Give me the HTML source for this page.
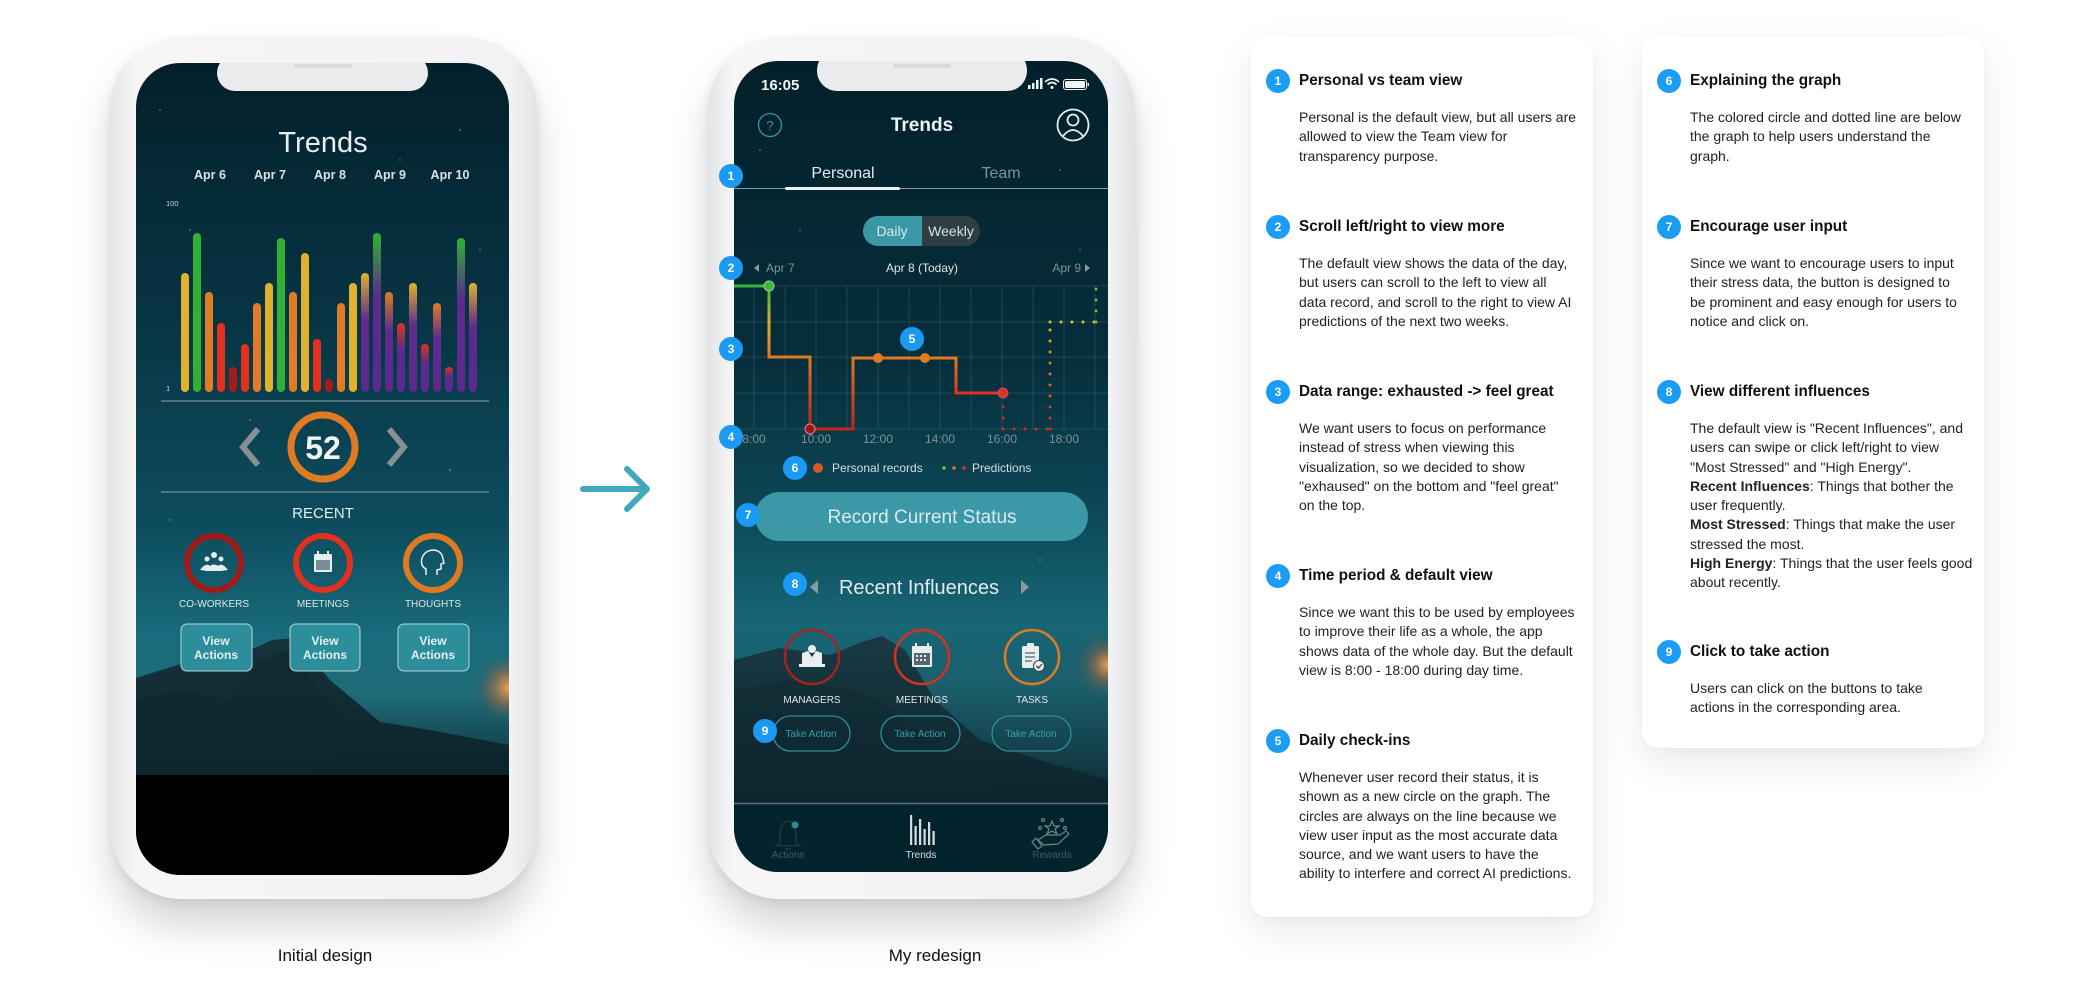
<!DOCTYPE html>
<html><head><meta charset="utf-8">
<style>
*{margin:0;padding:0;box-sizing:border-box}
body{width:2088px;height:1002px;background:#fff;position:relative;overflow:hidden;font-family:"Liberation Sans",Arial,sans-serif}
.frame{position:absolute;width:427px;height:862px;border-radius:72px;background:linear-gradient(90deg,#e4e5e8,#f6f6f7 6%,#f2f2f4 94%,#e2e3e6);box-shadow:0 28px 40px rgba(0,0,0,.16),0 4px 10px rgba(0,0,0,.08)}
.btn{position:absolute;width:4px;background:#e3e4e7;border-radius:2px}
.screen{position:absolute;border-radius:44px;overflow:hidden}
.card{position:absolute;background:#fff;border-radius:16px;box-shadow:0 14px 40px rgba(0,0,0,.09),0 2px 6px rgba(0,0,0,.03)}
.b{position:absolute;left:15px;width:24px;height:24px;border-radius:50%;background:#1b9df3;color:#fff;font-size:12px;font-weight:bold;text-align:center;line-height:24px}
.t{position:absolute;left:48px;font-size:15.3px;font-weight:bold;color:#111;white-space:nowrap;line-height:20px}
.p{position:absolute;left:48px;font-size:14px;color:#222;line-height:19.3px;white-space:nowrap}
.lbl{position:absolute;font-size:17px;color:#111;transform:translateX(-50%);white-space:nowrap}
</style></head><body>

<!-- Phone 1 -->
<div class="frame" style="left:110px;top:37px"></div>
<div class="btn" style="left:536px;top:230px;height:110px"></div>
<div class="screen" style="left:136px;top:63px;width:373px;height:812px">
<svg width="373" height="812" viewBox="136 63 373 812" style="display:block" font-family="Liberation Sans, Arial, sans-serif">
<defs>
<linearGradient id="sky1" x1="0" y1="63" x2="0" y2="780" gradientUnits="userSpaceOnUse">
<stop offset="0" stop-color="#03202a"/><stop offset=".35" stop-color="#073444"/><stop offset=".65" stop-color="#0d4d5e"/><stop offset=".8" stop-color="#186c7c"/><stop offset=".88" stop-color="#1e6b78"/><stop offset="1" stop-color="#0f2e38"/></linearGradient>
<radialGradient id="glow1" cx="509" cy="688" r="38" gradientUnits="userSpaceOnUse"><stop offset="0" stop-color="#f3a552"/><stop offset=".45" stop-color="#a26a48" stop-opacity=".6"/><stop offset="1" stop-color="#1d5c68" stop-opacity="0"/></radialGradient>
<linearGradient id="mt1" x1="0" y1="630" x2="0" y2="780" gradientUnits="userSpaceOnUse"><stop offset="0" stop-color="#17343d"/><stop offset="1" stop-color="#0b222a"/></linearGradient>
<linearGradient id="pY" x1="0" y1="0" x2="0" y2="1"><stop offset="0" stop-color="#e0b12e"/><stop offset=".4" stop-color="#5b2a8c"/></linearGradient>
<linearGradient id="pG" x1="0" y1="0" x2="0" y2="1"><stop offset="0" stop-color="#2fb234"/><stop offset=".4" stop-color="#5b2a8c"/></linearGradient>
<linearGradient id="pO" x1="0" y1="0" x2="0" y2="1"><stop offset="0" stop-color="#e07c25"/><stop offset=".4" stop-color="#5b2a8c"/></linearGradient>
<linearGradient id="pR" x1="0" y1="0" x2="0" y2="1"><stop offset="0" stop-color="#e0321e"/><stop offset=".4" stop-color="#5b2a8c"/></linearGradient>
</defs>
<rect x="136" y="63" width="373" height="812" fill="url(#sky1)"/>
<rect x="440" y="640" width="69" height="100" fill="url(#glow1)"/>
<path d="M136 678 L200 658 L255 648 L272 640 L295 638 L330 680 L380 722 L430 730 L509 745 L509 780 L136 780Z" fill="url(#mt1)"/>
<path d="M136 700 L180 690 L230 700 L260 660 L290 650 L320 690 L360 740 L300 780 L136 780Z" fill="#0e2830" opacity=".6"/>
<rect x="136" y="775" width="373" height="100" fill="#000"/>
<g fill="#fff" opacity=".5"><circle cx="160" cy="110" r=".8"/><circle cx="460" cy="130" r=".8"/><circle cx="190" cy="230" r=".7"/><circle cx="480" cy="250" r=".7"/><circle cx="250" cy="420" r=".7"/><circle cx="450" cy="470" r=".8"/><circle cx="170" cy="520" r=".7"/><circle cx="400" cy="160" r=".7"/></g>
<rect x="217" y="55" width="211" height="36" rx="18" fill="#eaebed"/>
<rect x="294" y="64" width="58" height="4" rx="2" fill="#d9dadd"/>
<text x="323" y="152" font-size="29" fill="#e8eef0" text-anchor="middle">Trends</text>
<g font-size="12.5" font-weight="bold" fill="#d9e3e6" text-anchor="middle"><text x="210" y="179">Apr 6</text><text x="270" y="179">Apr 7</text><text x="330" y="179">Apr 8</text><text x="390" y="179">Apr 9</text><text x="450" y="179">Apr 10</text></g>
<text x="166" y="206" font-size="7.5" fill="#c8d3d6">100</text><text x="166" y="391" font-size="7.5" fill="#c8d3d6">1</text>
<g stroke-width="8" stroke-linecap="round">
<line x1="185" y1="277" x2="185" y2="388" stroke="#e0b12e"/>
<line x1="197" y1="237" x2="197" y2="388" stroke="#2fb234"/>
<line x1="209" y1="296" x2="209" y2="388" stroke="#e07c25"/>
<line x1="221" y1="327" x2="221" y2="388" stroke="#e0321e"/>
<line x1="233" y1="371" x2="233" y2="388" stroke="#a31c1c"/>
<line x1="245" y1="348" x2="245" y2="388" stroke="#e0321e"/>
<line x1="257" y1="307" x2="257" y2="388" stroke="#e07c25"/>
<line x1="269" y1="287" x2="269" y2="388" stroke="#e0b12e"/>
<line x1="281" y1="242" x2="281" y2="388" stroke="#2fb234"/>
<line x1="293" y1="296" x2="293" y2="388" stroke="#e07c25"/>
<line x1="305" y1="257" x2="305" y2="388" stroke="#e0b12e"/>
<line x1="317" y1="343" x2="317" y2="388" stroke="#e0321e"/>
<line x1="329" y1="383" x2="329" y2="388" stroke="#a31c1c"/>
<line x1="341" y1="307" x2="341" y2="388" stroke="#e07c25"/>
<line x1="353" y1="287" x2="353" y2="388" stroke="#e0b12e"/>
</g>
<g>
<rect x="361" y="273" width="8" height="119" rx="4" fill="url(#pY)"/>
<rect x="373" y="233" width="8" height="159" rx="4" fill="url(#pG)"/>
<rect x="385" y="292" width="8" height="100" rx="4" fill="url(#pO)"/>
<rect x="397" y="323" width="8" height="69" rx="4" fill="url(#pR)"/>
<rect x="409" y="283" width="8" height="109" rx="4" fill="url(#pY)"/>
<rect x="421" y="344" width="8" height="48" rx="4" fill="url(#pR)"/>
<rect x="433" y="303" width="8" height="89" rx="4" fill="url(#pO)"/>
<rect x="445" y="367" width="8" height="25" rx="4" fill="url(#pR)"/>
<rect x="457" y="238" width="8" height="154" rx="4" fill="url(#pG)"/>
<rect x="469" y="283" width="8" height="109" rx="4" fill="url(#pY)"/>
</g>
<line x1="161" y1="401" x2="489" y2="401" stroke="#8fa5ab" stroke-width="1"/>
<line x1="161" y1="492" x2="489" y2="492" stroke="#8fa5ab" stroke-width="1"/>
<path d="M258 429 L243 447 L258 465" fill="none" stroke="#8a8f93" stroke-width="6"/>
<path d="M389 429 L404 447 L389 465" fill="none" stroke="#8a8f93" stroke-width="6"/>
<circle cx="323" cy="447" r="32" fill="none" stroke="#e07b22" stroke-width="7"/>
<text x="323" y="459" font-size="32" font-weight="bold" fill="#f2f4f5" text-anchor="middle">52</text>
<text x="323" y="518" font-size="15" fill="#e6eef0" text-anchor="middle">RECENT</text>
<circle cx="214" cy="563" r="27" fill="none" stroke="#a01a1a" stroke-width="6"/>
<circle cx="323" cy="563" r="27" fill="none" stroke="#e0301e" stroke-width="6"/>
<circle cx="433" cy="563" r="27" fill="none" stroke="#e07a20" stroke-width="6"/>
<g fill="#e8eef0"><circle cx="214" cy="555" r="3"/><circle cx="207" cy="559" r="2.5"/><circle cx="221" cy="559" r="2.5"/><path d="M205 571 Q214 558 223 571Z"/><path d="M200 570 Q206 562 210 566 L208 571Z"/><path d="M228 570 Q222 562 218 566 L220 571Z"/></g>
<g><rect x="314" y="554" width="18" height="18" rx="1" fill="#e8eef0"/><rect x="316" y="560" width="14" height="10" fill="#7a8d93"/><rect x="317" y="551" width="2" height="5" fill="#e8eef0"/><rect x="327" y="551" width="2" height="5" fill="#e8eef0"/></g>
<path d="M426 575 L426 569 Q420 566 422 558 Q425 550 434 550 Q442 551 443 559 L444 563 L441 564 L441 569 L437 570 L437 575" fill="none" stroke="#e8eef0" stroke-width="1.5"/>
<g font-size="10" fill="#dfe7e9" text-anchor="middle"><text x="214" y="607">CO-WORKERS</text><text x="323" y="607">MEETINGS</text><text x="433" y="607">THOUGHTS</text></g>
<g fill="#2b8e9a" stroke="#b9d6da" stroke-width="1"><rect x="181" y="624" width="71" height="47" rx="6"/><rect x="290" y="624" width="70" height="47" rx="6"/><rect x="398" y="624" width="71" height="47" rx="6"/></g>
<g font-size="12" font-weight="bold" fill="#e3f0f2" text-anchor="middle"><text x="216" y="645">View</text><text x="216" y="659">Actions</text><text x="325" y="645">View</text><text x="325" y="659">Actions</text><text x="433" y="645">View</text><text x="433" y="659">Actions</text></g>
</svg></div>

<!-- arrow -->
<svg style="position:absolute;left:570px;top:460px" width="100" height="60" viewBox="570 460 100 60"><path d="M583 489 L646 489 M627 469 L647 489 L627 509" fill="none" stroke="#41a9bb" stroke-width="6" stroke-linecap="round" stroke-linejoin="round"/></svg>

<!-- Phone 2 -->
<div class="frame" style="left:708px;top:37px"></div>
<div class="btn" style="left:1134px;top:230px;height:110px"></div>
<div class="screen" style="left:734px;top:61px;width:374px;height:811px">
<svg width="374" height="811" viewBox="734 61 374 811" style="display:block" font-family="Liberation Sans, Arial, sans-serif">
<defs>
<linearGradient id="sky2" x1="0" y1="61" x2="0" y2="803" gradientUnits="userSpaceOnUse">
<stop offset="0" stop-color="#03202a"/><stop offset=".4" stop-color="#062e3b"/><stop offset=".6" stop-color="#0c4656"/><stop offset=".76" stop-color="#176676"/><stop offset=".84" stop-color="#1b5f6c"/><stop offset="1" stop-color="#0d2a33"/></linearGradient>
<radialGradient id="glow2" cx="1108" cy="665" r="36" gradientUnits="userSpaceOnUse"><stop offset="0" stop-color="#f0a050"/><stop offset=".45" stop-color="#8d6248" stop-opacity=".6"/><stop offset="1" stop-color="#1d5c68" stop-opacity="0"/></radialGradient>
<linearGradient id="mt2" x1="0" y1="630" x2="0" y2="803" gradientUnits="userSpaceOnUse"><stop offset="0" stop-color="#1a3a43"/><stop offset="1" stop-color="#0c242c"/></linearGradient>
<linearGradient id="v1" x1="0" y1="286" x2="0" y2="357" gradientUnits="userSpaceOnUse"><stop offset="0" stop-color="#3cb43c"/><stop offset=".5" stop-color="#d9b02a"/><stop offset="1" stop-color="#e07a22"/></linearGradient>
<linearGradient id="v2" x1="0" y1="357" x2="0" y2="429" gradientUnits="userSpaceOnUse"><stop offset="0" stop-color="#e07a22"/><stop offset="1" stop-color="#c0201a"/></linearGradient>
<linearGradient id="v3" x1="0" y1="358" x2="0" y2="393" gradientUnits="userSpaceOnUse"><stop offset="0" stop-color="#e07a22"/><stop offset="1" stop-color="#e0321e"/></linearGradient>
<linearGradient id="v4" x1="0" y1="286" x2="0" y2="429" gradientUnits="userSpaceOnUse"><stop offset="0" stop-color="#3cb43c"/><stop offset=".25" stop-color="#e2c22a"/><stop offset=".55" stop-color="#e07a22"/><stop offset="1" stop-color="#d42a1a"/></linearGradient>
</defs>
<rect x="734" y="61" width="374" height="811" fill="url(#sky2)"/>
<rect x="1040" y="620" width="68" height="90" fill="url(#glow2)"/>
<path d="M734 660 L780 648 L830 655 L862 642 L882 636 L905 650 L935 700 L980 740 L1040 760 L1108 780 L1108 803 L734 803Z" fill="url(#mt2)"/>
<path d="M734 690 L790 680 L850 690 L880 700 L930 740 L1000 790 L734 803Z" fill="#0d2830" opacity=".5"/>
<g fill="#fff" opacity=".5"><circle cx="760" cy="150" r=".8"/><circle cx="1060" cy="170" r=".7"/><circle cx="800" cy="230" r=".7"/><circle cx="1080" cy="250" r=".7"/><circle cx="840" cy="600" r=".7"/><circle cx="1040" cy="560" r=".8"/></g>
<rect x="734" y="803" width="374" height="69" fill="#03232c"/>
<line x1="734" y1="803.5" x2="1108" y2="803.5" stroke="#5e7279" stroke-width="1.5"/>
<rect x="817" y="50" width="210" height="41" rx="20" fill="#eaebed"/>
<rect x="893" y="64" width="58" height="4" rx="2" fill="#d9dadd"/>
<text x="761" y="90" font-size="15" font-weight="bold" fill="#f2f4f5">16:05</text>
<g fill="#f2f4f5"><rect x="1028" y="85" width="2.5" height="4"/><rect x="1032" y="83" width="2.5" height="6"/><rect x="1036" y="80" width="2.5" height="9"/><rect x="1040" y="78" width="2.5" height="11"/></g>
<path d="M1045 82 Q1052 76 1059 82 M1047.5 84.5 Q1052 80.5 1056.5 84.5" fill="none" stroke="#f2f4f5" stroke-width="1.6"/><circle cx="1052" cy="87.5" r="1.5" fill="#f2f4f5"/>
<rect x="1063.5" y="79.5" width="23" height="10" rx="2.5" fill="none" stroke="#f2f4f5" stroke-width="1"/><rect x="1065" y="81" width="20" height="7" rx="1.5" fill="#f2f4f5"/><rect x="1087.5" y="83" width="1.5" height="3" fill="#f2f4f5"/>
<circle cx="770" cy="125" r="11.5" fill="none" stroke="#2a9aa8" stroke-width="1.3"/><text x="770" y="130" font-size="13" fill="#2a9aa8" text-anchor="middle">?</text>
<text x="922" y="131" font-size="19" font-weight="bold" fill="#eef2f3" text-anchor="middle">Trends</text>
<circle cx="1073" cy="125" r="15.5" fill="none" stroke="#e8eef0" stroke-width="1.8"/><circle cx="1073" cy="120" r="5.5" fill="none" stroke="#e8eef0" stroke-width="1.8"/><path d="M1063 136 Q1073 124 1083 136" fill="none" stroke="#e8eef0" stroke-width="1.8"/>
<text x="843" y="178" font-size="16" fill="#e6ecee" text-anchor="middle">Personal</text>
<text x="1001" y="178" font-size="16" fill="#7f9197" text-anchor="middle">Team</text>
<line x1="734" y1="188.5" x2="1108" y2="188.5" stroke="#8c9ca1" stroke-width="1"/>
<rect x="785" y="187" width="115" height="3" rx="1.5" fill="#eef2f3"/>
<rect x="863" y="216" width="117" height="30" rx="15" fill="#2f3e43"/>
<path d="M878 216 L922 216 L922 246 L878 246 A15 15 0 0 1 878 216Z" fill="#3a97a5"/>
<text x="892" y="236" font-size="14" fill="#d5eaee" text-anchor="middle">Daily</text>
<text x="951" y="236" font-size="14" fill="#d9e2e4" text-anchor="middle">Weekly</text>
<path d="M759 264 L759 272 L754 268Z" fill="#8a9a9f"/><text x="766" y="272" font-size="12" fill="#7f9197">Apr 7</text>
<text x="922" y="272" font-size="12" fill="#dfe6e8" text-anchor="middle">Apr 8 (Today)</text>
<text x="1081" y="272" font-size="12" fill="#7f9197" text-anchor="end">Apr 9</text><path d="M1085 264 L1085 272 L1090 268Z" fill="#8a9a9f"/>
<g stroke="#5f8a94" stroke-opacity=".28" stroke-width="1">
<line x1="734" y1="286" x2="1108" y2="286"/><line x1="734" y1="322" x2="1108" y2="322"/><line x1="734" y1="357" x2="1108" y2="357"/><line x1="734" y1="393" x2="1108" y2="393"/><line x1="734" y1="429" x2="1108" y2="429"/>
<line x1="754" y1="286" x2="754" y2="429"/><line x1="785" y1="286" x2="785" y2="429"/><line x1="816" y1="286" x2="816" y2="429"/><line x1="847" y1="286" x2="847" y2="429"/><line x1="878" y1="286" x2="878" y2="429"/><line x1="909" y1="286" x2="909" y2="429"/><line x1="940" y1="286" x2="940" y2="429"/><line x1="971" y1="286" x2="971" y2="429"/><line x1="1002" y1="286" x2="1002" y2="429"/><line x1="1033" y1="286" x2="1033" y2="429"/><line x1="1064" y1="286" x2="1064" y2="429"/><line x1="1095" y1="286" x2="1095" y2="429"/>
</g>
<g fill="none" stroke-width="3" stroke-linecap="square">
<line x1="734" y1="286" x2="769" y2="286" stroke="#3cb43c"/>
<line x1="769" y1="286" x2="769" y2="357" stroke="url(#v1)"/>
<line x1="769" y1="357" x2="810" y2="357" stroke="#e07a22"/>
<line x1="810" y1="357" x2="810" y2="429" stroke="url(#v2)"/>
<line x1="810" y1="429" x2="853" y2="429" stroke="#c8221a"/>
<line x1="853" y1="429" x2="853" y2="358" stroke="url(#v2)"/>
<line x1="853" y1="358" x2="956" y2="358" stroke="#e07a22"/>
<line x1="956" y1="358" x2="956" y2="393" stroke="url(#v3)"/>
<line x1="956" y1="393" x2="1003" y2="393" stroke="#e0321e"/>
</g>
<g fill="none" stroke-width="3" stroke-linecap="round" stroke-dasharray="0 11">
<path d="M1003 396 L1003 429 L1050 429" stroke="#d42a1a"/>
<path d="M1050 429 L1050 322" stroke="url(#v4)"/>
<path d="M1050 322 L1096 322" stroke="#e2c22a"/>
<path d="M1096 322 L1096 286" stroke="#7ab83a"/>
</g>
<circle cx="769" cy="286" r="5" fill="#3cb43c" stroke="#9ad08f" stroke-width="1"/>
<circle cx="810" cy="429" r="5" fill="#9c1616" stroke="#d88" stroke-width="1"/>
<circle cx="878" cy="358" r="5" fill="#e07a22"/><circle cx="925" cy="358" r="5" fill="#e07a22"/>
<circle cx="1003" cy="393" r="5" fill="#e0321e" stroke="#f6a" stroke-opacity=".5" stroke-width="1"/>
<g font-size="12" fill="#7f9197" text-anchor="middle"><text x="754" y="443">8:00</text><text x="816" y="443">10:00</text><text x="878" y="443">12:00</text><text x="940" y="443">14:00</text><text x="1002" y="443">16:00</text><text x="1064" y="443">18:00</text></g>
<circle cx="818" cy="468" r="5" fill="#d65a22"/>
<text x="832" y="472" font-size="12" fill="#d5dfe2">Personal records</text>
<circle cx="944" cy="468" r="1.8" fill="#7ab83a"/><circle cx="954" cy="468" r="1.8" fill="#e07a22"/><circle cx="964" cy="468" r="1.8" fill="#e0321e"/>
<text x="972" y="472" font-size="12" fill="#d5dfe2">Predictions</text>
<rect x="755" y="492" width="333" height="49" rx="24.5" fill="#3c97a6"/>
<text x="922" y="523" font-size="19" fill="#d6ecef" text-anchor="middle">Record Current Status</text>
<path d="M818 580 L818 594 L810 587Z" fill="#8a9ba0"/>
<text x="919" y="594" font-size="20" fill="#e3eaec" text-anchor="middle">Recent Influences</text>
<path d="M1021 580 L1021 594 L1029 587Z" fill="#8a9ba0"/>
<circle cx="812" cy="657" r="27" fill="none" stroke="#a3241d" stroke-width="2.5"/>
<circle cx="922" cy="657" r="27" fill="none" stroke="#d9301e" stroke-width="2.5"/>
<circle cx="1032" cy="657" r="27" fill="none" stroke="#df7b22" stroke-width="2.5"/>
<g fill="#e8eef0"><circle cx="812" cy="649" r="4"/><path d="M802 666 L802 653 L808 651 L812 657 L816 651 L822 653 L822 666Z"/><rect x="799" y="664" width="26" height="3"/></g>
<g><rect x="912" y="646" width="20" height="21" rx="1" fill="#e8eef0"/><rect x="914" y="653" width="16" height="12" fill="#56666b"/><g fill="#e8eef0"><rect x="916" y="655" width="2" height="2"/><rect x="920" y="655" width="2" height="2"/><rect x="924" y="655" width="2" height="2"/><rect x="916" y="659" width="2" height="2"/><rect x="920" y="659" width="2" height="2"/><rect x="924" y="659" width="2" height="2"/></g><rect x="915" y="643" width="2" height="5" fill="#e8eef0"/><rect x="927" y="643" width="2" height="5" fill="#e8eef0"/></g>
<g><rect x="1022" y="646" width="17" height="22" rx="1.5" fill="#e8eef0"/><rect x="1027" y="643" width="7" height="5" rx="1" fill="#e8eef0"/><g stroke="#56666b" stroke-width="1.3"><line x1="1025" y1="653" x2="1035" y2="653"/><line x1="1025" y1="657" x2="1035" y2="657"/><line x1="1025" y1="661" x2="1032" y2="661"/></g><circle cx="1039" cy="666" r="5.5" fill="#e8eef0" stroke="#30454c" stroke-width="1"/><path d="M1036.5 666 L1038.5 668 L1042 664" fill="none" stroke="#30454c" stroke-width="1.3"/></g>
<g font-size="10" fill="#e0e7e9" text-anchor="middle"><text x="812" y="703">MANAGERS</text><text x="922" y="703">MEETINGS</text><text x="1032" y="703">TASKS</text></g>
<g fill="none" stroke="#2e8e9c" stroke-width="1.3"><rect x="773" y="716" width="77" height="35" rx="17.5"/><rect x="881" y="716" width="79" height="35" rx="17.5"/><rect x="992" y="716" width="79" height="35" rx="17.5"/></g>
<g font-size="10" fill="#3aa0ad" text-anchor="middle"><text x="811" y="737">Take Action</text><text x="920" y="737">Take Action</text><text x="1031" y="737">Take Action</text></g>
<path d="M780 843 L780 835 Q780 823 788 821 Q796 823 796 835 L796 843 L800 846 L776 846Z M785 848 Q788 851 791 848" fill="none" stroke="#17363f" stroke-width="1.8"/>
<circle cx="795" cy="825" r="3.5" fill="#2e8a98"/>
<g fill="#d5dde0"><rect x="910" y="815" width="2.2" height="30"/><rect x="914.5" y="826" width="2.2" height="19"/><rect x="919" y="819" width="2.2" height="26"/><rect x="923.5" y="829" width="2.2" height="16"/><rect x="928" y="822" width="2.2" height="23"/><rect x="932.5" y="831" width="2.2" height="14"/></g>
<g fill="none" stroke="#8a9ba0" stroke-width="1.2" opacity=".8"><path d="M1038 840 L1046 835 L1060 835 L1066 831 L1069 834 L1058 844 L1044 845 Z"/><path d="M1036 838 L1042 846 L1038 849 L1032 842Z"/><path d="M1052 821 L1054 826 L1059 826 L1055 829 L1057 834 L1052 831 L1047 834 L1049 829 L1045 826 L1050 826Z"/><circle cx="1043" cy="820" r="1.5"/><circle cx="1062" cy="820" r="1.5"/><circle cx="1040" cy="828" r="1.5"/><circle cx="1065" cy="828" r="1.5"/></g>
<g font-size="10" text-anchor="middle"><text x="788" y="858" fill="#3f5a62">Actions</text><text x="921" y="858" fill="#d5dde0">Trends</text><text x="1052" y="858" fill="#3f5a62">Rewards</text></g>
</svg></div>

<!-- badges overlay -->
<svg style="position:absolute;left:0;top:0" width="2088" height="1002" font-family="Liberation Sans, Arial, sans-serif">
<g fill="#1a9af2"><circle cx="731" cy="176" r="12"/><circle cx="731" cy="268" r="12"/><circle cx="731" cy="349" r="12"/><circle cx="731" cy="437" r="12"/><circle cx="912" cy="339" r="12"/><circle cx="795" cy="468" r="12"/><circle cx="748" cy="515" r="12"/><circle cx="795" cy="584" r="12"/><circle cx="765" cy="731" r="12"/></g>
<g font-size="12" font-weight="bold" fill="#fff" text-anchor="middle"><text x="731" y="180">1</text><text x="731" y="272">2</text><text x="731" y="353">3</text><text x="731" y="441">4</text><text x="912" y="343">5</text><text x="795" y="472">6</text><text x="748" y="519">7</text><text x="795" y="588">8</text><text x="765" y="735">9</text></g>
</svg>

<div class="lbl" style="left:325px;top:946px">Initial design</div>
<div class="lbl" style="left:935px;top:946px">My redesign</div>

<!-- Card 1 -->
<div class="card" style="left:1251px;top:37px;width:342px;height:880px">
<div class="b" style="top:32px">1</div><div class="t" style="top:34px">Personal vs team view</div>
<div class="p" style="top:71px">Personal is the default view, but all users are<br>allowed to view the Team view for<br>transparency purpose.</div>
<div class="b" style="top:178px">2</div><div class="t" style="top:180px">Scroll left/right to view more</div>
<div class="p" style="top:217px">The default view shows the data of the day,<br>but users can scroll to the left to view all<br>data record, and scroll to the right to view AI<br>predictions of the next two weeks.</div>
<div class="b" style="top:343px">3</div><div class="t" style="top:345px">Data range: exhausted -&gt; feel great</div>
<div class="p" style="top:382px">We want users to focus on performance<br>instead of stress when viewing this<br>visualization, so we decided to show<br>"exhaused" on the bottom and "feel great"<br>on the top.</div>
<div class="b" style="top:527px">4</div><div class="t" style="top:529px">Time period &amp; default view</div>
<div class="p" style="top:566px">Since we want this to be used by employees<br>to improve their life as a whole, the app<br>shows data of the whole day. But the default<br>view is 8:00 - 18:00 during day time.</div>
<div class="b" style="top:692px">5</div><div class="t" style="top:694px">Daily check-ins</div>
<div class="p" style="top:731px">Whenever user record their status, it is<br>shown as a new circle on the graph. The<br>circles are always on the line because we<br>view user input as the most accurate data<br>source, and we want users to have the<br>ability to interfere and correct AI predictions.</div>
</div>

<!-- Card 2 -->
<div class="card" style="left:1642px;top:37px;width:342px;height:711px">
<div class="b" style="top:32px">6</div><div class="t" style="top:34px">Explaining the graph</div>
<div class="p" style="top:71px">The colored circle and dotted line are below<br>the graph to help users understand the<br>graph.</div>
<div class="b" style="top:178px">7</div><div class="t" style="top:180px">Encourage user input</div>
<div class="p" style="top:217px">Since we want to encourage users to input<br>their stress data, the button is designed to<br>be prominent and easy enough for users to<br>notice and click on.</div>
<div class="b" style="top:343px">8</div><div class="t" style="top:345px">View different influences</div>
<div class="p" style="top:382px">The default view is "Recent Influences", and<br>users can swipe or click left/right to view<br>"Most Stressed" and "High Energy".<br><b>Recent Influences</b>: Things that bother the<br>user frequently.<br><b>Most Stressed</b>: Things that make the user<br>stressed the most.<br><b>High Energy</b>: Things that the user feels good<br>about recently.</div>
<div class="b" style="top:603px">9</div><div class="t" style="top:605px">Click to take action</div>
<div class="p" style="top:642px">Users can click on the buttons to take<br>actions in the corresponding area.</div>
</div>
</body></html>
